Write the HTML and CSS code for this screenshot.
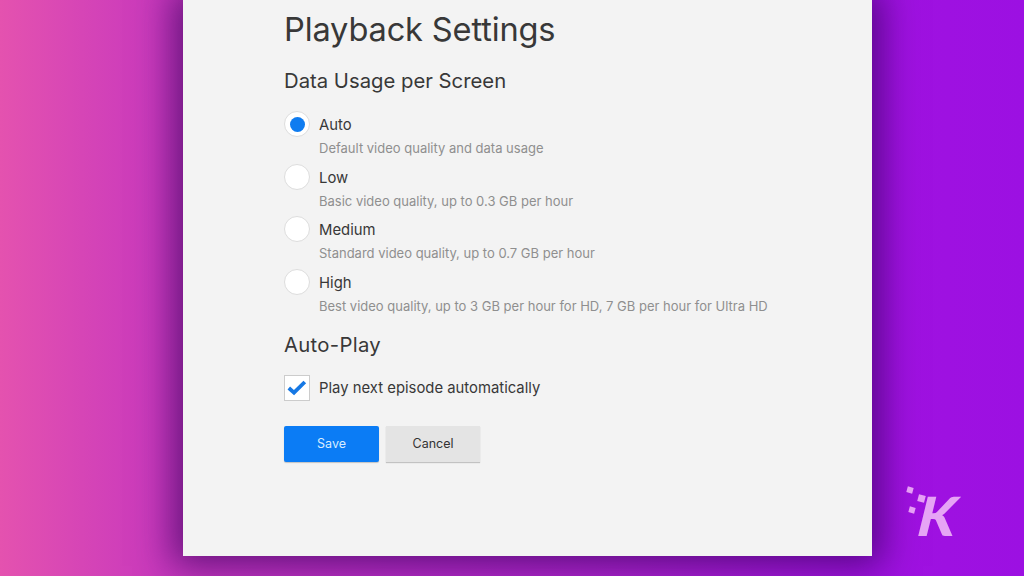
FILE: index.html
```html
<!DOCTYPE html>
<html lang="en">
<head>
  <meta charset="UTF-8">
  <title>Playback Settings</title>
  <link rel="stylesheet" href="styles.css">
</head>
<body>
<div class="panel">
  <h1>Playback Settings</h1>
  <h2>Data Usage per Screen</h2>
  <ul class="options">
    <li class="option">
      <span class="radio checked"></span>
      <div>
        <div class="label">Auto</div>
        <div class="hint">Default video quality and data usage</div>
      </div>
    </li>
    <li class="option">
      <span class="radio"></span>
      <div>
        <div class="label">Low</div>
        <div class="hint">Basic video quality, up to 0.3 GB per hour</div>
      </div>
    </li>
    <li class="option">
      <span class="radio"></span>
      <div>
        <div class="label">Medium</div>
        <div class="hint">Standard video quality, up to 0.7 GB per hour</div>
      </div>
    </li>
    <li class="option">
      <span class="radio"></span>
      <div>
        <div class="label">High</div>
        <div class="hint">Best video quality, up to 3 GB per hour for HD, 7 GB per hour for Ultra HD</div>
      </div>
    </li>
  </ul>
  <h2 class="autoplay">Auto-Play</h2>
  <div class="check-row">
    <span class="checkbox">
      <svg width="20" height="16" viewBox="0 0 20 16"><path d="M1.8 8 L7 12.6 L17.8 2" fill="none" stroke="#1678e4" stroke-width="3.8"/></svg>
    </span>
    <span class="label">Play next episode automatically</span>
  </div>
  <div class="buttons">
    <span class="btn save">Save</span>
    <span class="btn cancel">Cancel</span>
  </div>
</div>
<div class="logo">
  <span class="dot dot1"></span>
  <span class="dot dot2"></span>
  <span class="dot dot3"></span>
  <span class="letter">K</span>
</div>
</body>
</html>
```

FILE: styles.css
```css
* {
  margin: 0;
  padding: 0;
  box-sizing: border-box;
}

ul {
  list-style: none;
}

body {
  width: 1024px;
  height: 576px;
  overflow: hidden;
  position: relative;
  font-family: "Inter", "Liberation Sans", sans-serif;
  color: #383838;
  background: linear-gradient(90deg, #e452af 0%, #c838bd 16%, #b024d0 60%, #a012e0 85%, #9c10e2 100%);
}

.panel {
  width: 689px;
  height: 556px;
  margin-left: 183px;
  padding: 10px 0 0 101px;
  background-color: #f3f3f3;
  box-shadow: 0 0 34px 10px rgba(50, 0, 90, 0.66);
}

h1 {
  font-size: 32.6px;
  line-height: 38px;
  font-weight: 400;
  letter-spacing: -0.15px;
}

h2 {
  margin-top: 20px;
  font-size: 20.3px;
  line-height: 26px;
  font-weight: 400;
}

.options {
  margin-top: 16px;
}

.option {
  display: flex;
  gap: 9px;
  height: 52.6px;
}

.radio {
  width: 26px;
  height: 26px;
  margin-top: 1px;
  border-radius: 50%;
  border: 1px solid #ddd;
  background-color: #fff;
  display: flex;
  align-items: center;
  justify-content: center;
}

.radio.checked::after {
  content: "";
  width: 15px;
  height: 15px;
  border-radius: 50%;
  background-color: #0f7cf0;
}

.label {
  font-size: 14.85px;
  line-height: 28px;
  color: #383838;
}

.option .label {
  margin-top: 1px;
}

.hint {
  margin-top: -1px;
  font-size: 13px;
  line-height: 20px;
  color: #8f8f8f;
}

.autoplay {
  margin-top: 12px;
  letter-spacing: 0.3px;
}

.check-row {
  display: flex;
  align-items: center;
  gap: 9px;
  margin-top: 16px;
}

.checkbox {
  width: 26px;
  height: 26px;
  border: 1px solid #ccc;
  background-color: #fff;
  display: flex;
  align-items: center;
  justify-content: center;
}

.buttons {
  display: flex;
  gap: 7px;
  margin-top: 24px;
}

.btn {
  height: 36px;
  font-size: 12.5px;
  line-height: 36px;
  text-align: center;
  box-shadow: 0 1px 1px rgba(0, 0, 0, 0.2);
}

.save {
  width: 95px;
  border-radius: 2px;
  background-color: #0b7cf5;
  color: #d8ecff;
}

.cancel {
  width: 94px;
  background-color: #e4e4e4;
  color: #333;
}

/* watermark */
.logo {
  position: absolute;
  left: 905px;
  top: 485px;
  width: 60px;
  height: 56px;
}

.letter {
  position: absolute;
  left: 15px;
  top: 3px;
  font-family: "Lato", sans-serif;
  font-size: 54px;
  line-height: 56px;
  font-weight: 900;
  font-style: italic;
  color: #e6a4f5;
  transform: scaleX(1.08) skewX(-6deg);
}

.dot {
  position: absolute;
  background-color: #e6a0f5;
  transform: rotate(15deg);
}

.dot1 {
  left: 2px;
  top: 2px;
  width: 6px;
  height: 6px;
}

.dot2 {
  left: 13px;
  top: 10px;
  width: 7px;
  height: 7px;
}

.dot3 {
  left: 4px;
  top: 22px;
  width: 6px;
  height: 6px;
}
```
